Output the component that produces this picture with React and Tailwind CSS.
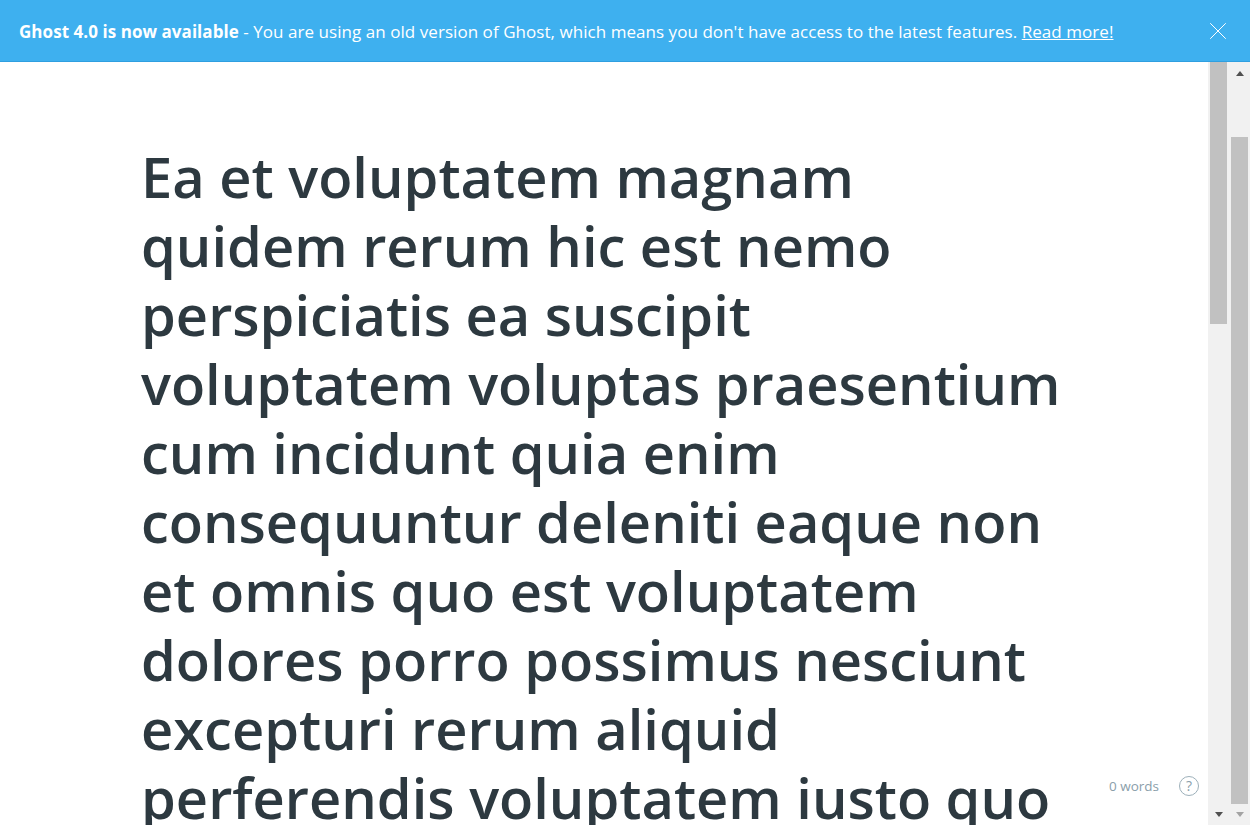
import { X } from "lucide-react";

const title =
  "Ea et voluptatem magnam quidem rerum hic est nemo perspiciatis ea suscipit voluptatem voluptas praesentium cum incidunt quia enim consequuntur deleniti eaque non et omnis quo est voluptatem dolores porro possimus nesciunt excepturi rerum aliquid perferendis voluptatem iusto quo";

function App() {
  return (
    <div className="flex h-[825px] w-[1250px] flex-col overflow-hidden bg-white font-['Open_Sans','Noto_Sans',sans-serif]">
      {/* Upgrade banner */}
      <div className="flex h-[62px] shrink-0 items-center justify-between border-b border-[#2f9fe0] bg-[#3eb0ef] pl-[19px] pr-[17px] text-[17px] tracking-[0.05px] text-white">
        <p className="pt-[2px]">
          <span className="font-bold">Ghost 4.0 is now available</span> - You are using an old version of Ghost, which means you don't have access to the latest features.{" "}
          <a className="underline">Read more!</a>
        </p>
        <X size={30} strokeWidth={0.8} />
      </div>

      <div className="flex min-h-0 flex-1">
        {/* Editor */}
        <div className="relative min-w-0 flex-1 overflow-hidden">
          <h1 className="w-[1066px] pl-[141px] pt-[80px] text-[56px] font-semibold leading-[69px] text-[#2d3940]">
            {title}
          </h1>
          <div className="absolute bottom-[29px] right-[9px] flex items-center gap-5 bg-white pl-3 text-[13.5px] text-[#8a9eaa]">
            <span>0 words</span>
            <span className="flex h-5 w-5 items-center justify-center rounded-full border border-[#9db0ba] text-[14px]">?</span>
          </div>
        </div>

        {/* Two nested scrollbars */}
        <div className="flex w-[42px] shrink-0 bg-[#f1f1f1]">
          <div className="flex w-[21px] flex-col pl-[2px] pr-[2px]">
            <div className="h-[262px] w-[17px] bg-[#c1c1c1]" />
            <div className="flex-1" />
            <div className="flex h-[22px] w-[17px] items-center justify-center">
              <span className="h-0 w-0 border-x-4 border-t-[5px] border-x-transparent border-t-[#505050]" />
            </div>
          </div>
          <div className="flex w-[21px] flex-col pl-[2px]">
            <div className="flex h-[22px] w-[17px] items-center justify-center">
              <span className="h-0 w-0 border-x-4 border-b-[5px] border-x-transparent border-b-[#505050]" />
            </div>
            <div className="mt-[53px] h-[667px] w-[17px] bg-[#c1c1c1]" />
            <div className="flex-1" />
            <div className="flex h-[21px] w-[17px] items-center justify-center">
              <span className="h-0 w-0 border-x-4 border-t-[5px] border-x-transparent border-t-[#a3a3a3]" />
            </div>
          </div>
        </div>
      </div>
    </div>
  );
}

export default App;
